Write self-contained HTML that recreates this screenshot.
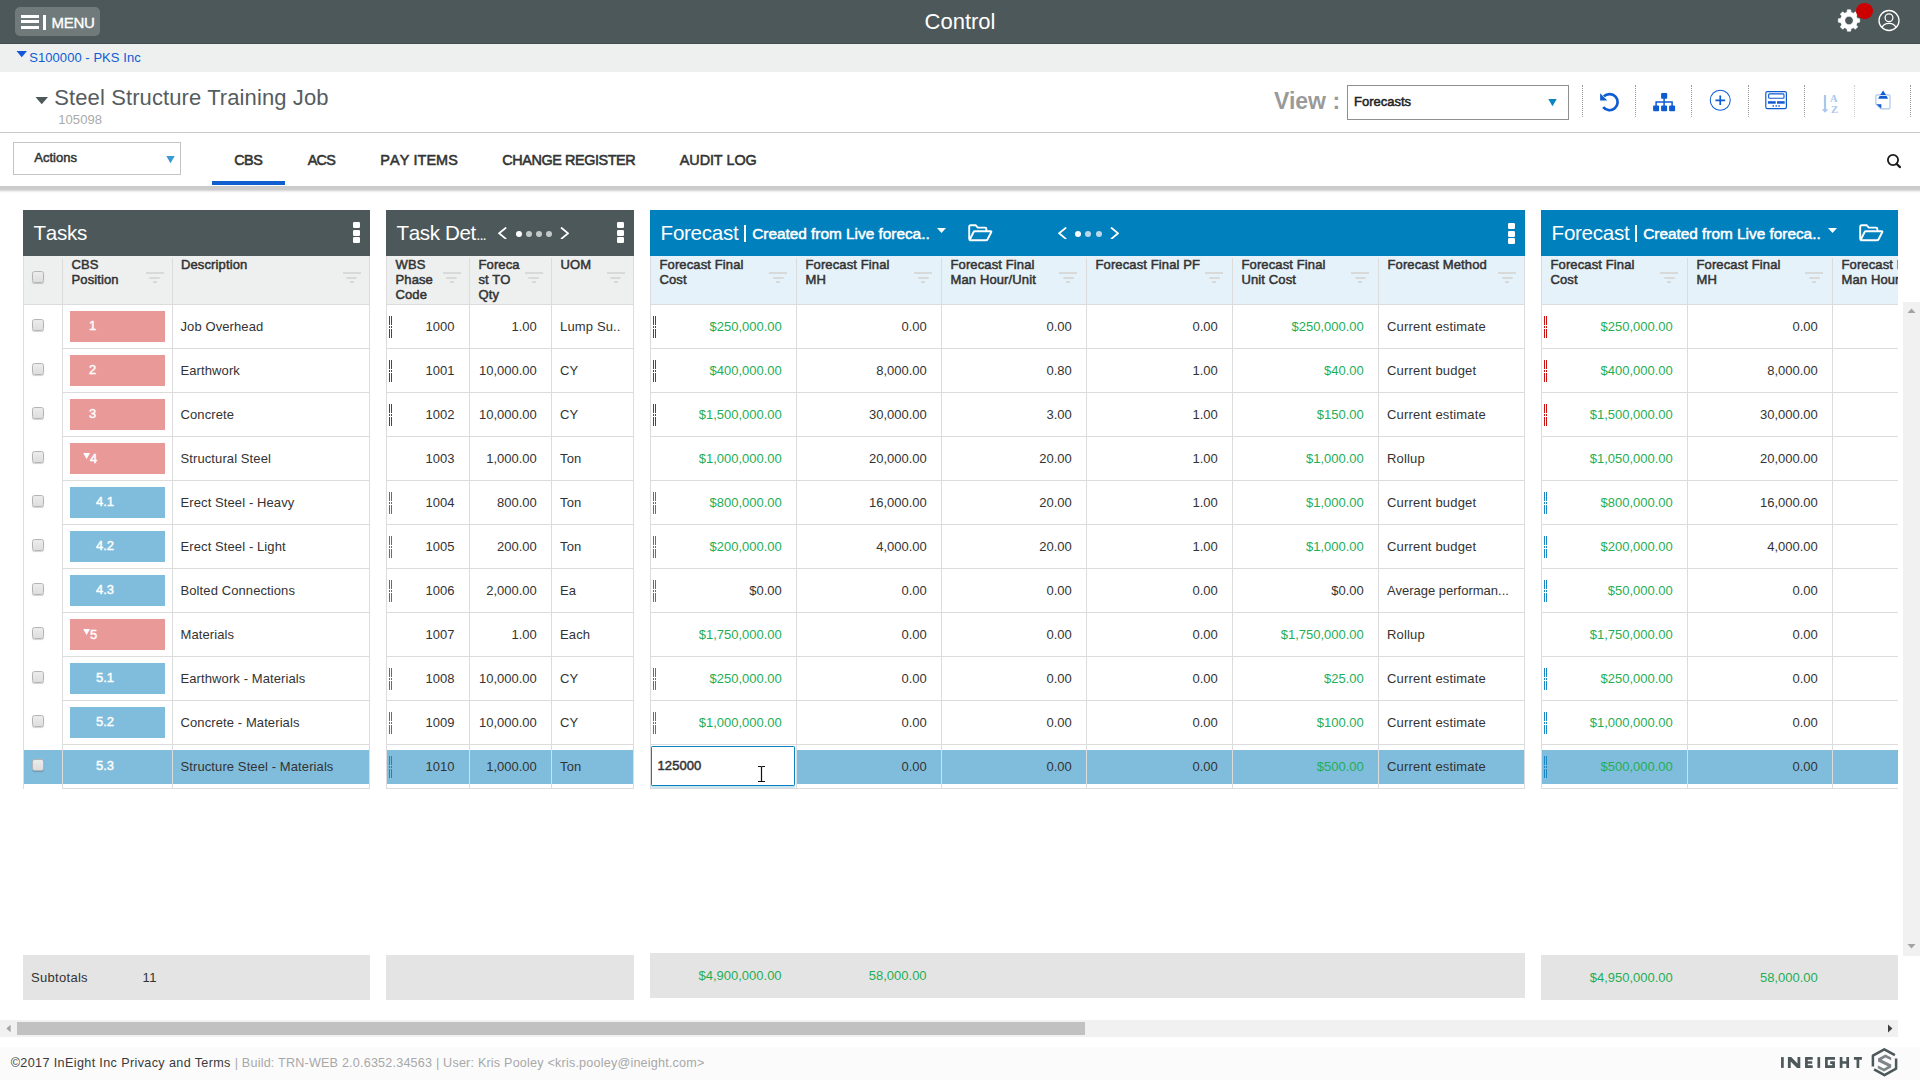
<!DOCTYPE html>
<html><head><meta charset="utf-8"><title>Control</title>
<style>
*{box-sizing:border-box;margin:0;padding:0}
html,body{width:1920px;height:1080px;overflow:hidden;background:#fff}
body{position:relative;font-family:"Liberation Sans",sans-serif;font-size:13px;color:#333}
div,svg{position:absolute}
.a{position:absolute}
.t{white-space:nowrap;line-height:43px;height:43px;font-size:13px;color:#333}
.g{color:#1fae55}
.h{white-space:nowrap;font-size:13px;line-height:15px;color:#333;-webkit-text-stroke:.5px #333;letter-spacing:.12px}
.m{-webkit-text-stroke:.45px currentColor}
.cb{width:12px;height:12px;border:1px solid #b4b4b4;border-radius:2.5px;background:linear-gradient(#ececec,#dedede);box-shadow:0 1px 1px rgba(0,0,0,.18)}
.ph{white-space:nowrap;color:#fff;font-size:20.6px;line-height:46px;height:46px}
.tab{white-space:nowrap;font-size:14.4px;color:#333;line-height:20px;top:150px;-webkit-text-stroke:.55px #333;font-kerning:none}
.sep{top:85px;width:0;height:32px;border-left:1px dotted #9a9a9a}
</style></head><body>

<div style="left:0px;top:0px;width:1920px;height:44px;background:#4d585a;border-bottom:1px solid #444e50"></div>
<div style="left:15px;top:7px;width:85px;height:29px;background:#717a7b;border-radius:5px"></div>
<div style="left:20.5px;top:14.5px;width:18.5px;height:3.2px;background:#fff"></div>
<div style="left:20.5px;top:20px;width:18.5px;height:3.2px;background:#fff"></div>
<div style="left:20.5px;top:25.5px;width:18.5px;height:3.2px;background:#fff"></div>
<div style="left:43.3px;top:15.2px;width:2.6px;height:14.6px;background:#fff"></div>
<div class="t" style="left:51.5px;top:7.5px;color:#fff;font-size:15px;line-height:30px;height:30px;letter-spacing:-.3px;-webkit-text-stroke:.35px #fff">MENU</div>
<div class="t" style="left:0px;top:0px;width:1920px;text-align:center;color:#fff;font-size:22px;line-height:43px;height:43px;left:0">Control</div>
<svg style="left:1836px;top:8px" width="26" height="26" viewBox="0 0 26 26"><path d="M11.02,4.23 L11.31,1.83 L14.69,1.83 L14.98,4.23 L17.44,5.25 L19.35,3.76 L21.74,6.15 L20.25,8.06 L21.27,10.52 L23.67,10.81 L23.67,14.19 L21.27,14.48 L20.25,16.94 L21.74,18.85 L19.35,21.24 L17.44,19.75 L14.98,20.77 L14.69,23.17 L11.31,23.17 L11.02,20.77 L8.56,19.75 L6.65,21.24 L4.26,18.85 L5.75,16.94 L4.73,14.48 L2.33,14.19 L2.33,10.81 L4.73,10.52 L5.75,8.06 L4.26,6.15 L6.65,3.76 L8.56,5.25Z M17.20,12.50 A4.2,4.2 0 1,0 8.80,12.50 A4.2,4.2 0 1,0 17.20,12.50Z" fill="#fff" fill-rule="evenodd" stroke="#fff" stroke-width=".6" stroke-linejoin="round"/></svg>
<div style="left:1856px;top:2.8px;width:17px;height:16.2px;background:#cc0000;border-radius:50%"></div>
<svg style="left:1877px;top:9px" width="24" height="24" viewBox="0 0 24 24"><defs><clipPath id="uc"><circle cx="12" cy="11.5" r="10"/></clipPath></defs><circle cx="12" cy="11.5" r="10" fill="none" stroke="#fff" stroke-width="1.3"/><circle cx="12" cy="8.8" r="3.9" fill="none" stroke="#fff" stroke-width="1.25"/><path d="M5,18.8 Q6.4,14.4 12,14.4 Q17.6,14.4 19,18.8" fill="none" stroke="#fff" stroke-width="1.25" clip-path="url(#uc)"/></svg>
<div style="left:0px;top:44px;width:1920px;height:28px;background:#eef0f0"></div>
<svg style="left:16px;top:51px" width="12" height="7" viewBox="0 0 12 7"><path d="M0.5,0 H11 L5.75,6.2Z" fill="#1358d8"/></svg>
<div class="t" style="left:29.3px;top:48px;color:#0d5cd4;font-size:13px;line-height:20px;height:20px;letter-spacing:.05px">S100000 - PKS Inc</div>
<svg style="left:35px;top:97px" width="14" height="8" viewBox="0 0 14 8"><path d="M0.5,0 H13 L6.75,7.2Z" fill="#4d585a"/></svg>
<div class="t" style="left:54.3px;top:83px;font-size:22px;line-height:30px;height:30px;color:#555d5f;letter-spacing:.1px">Steel Structure Training Job</div>
<div class="t" style="left:58.3px;top:111px;font-size:13px;line-height:18px;height:18px;color:#aaa;letter-spacing:.05px">105098</div>
<div class="t" style="left:1274px;top:84px;font-size:23px;font-weight:bold;line-height:34px;height:34px;color:#9a9a9a">View :</div>
<div style="left:1347px;top:85px;width:222px;height:35px;border:1px solid #8f8f8f;background:#fff"></div>
<div class="t" style="left:1354px;top:91px;font-size:13px;line-height:22px;height:22px;color:#222;-webkit-text-stroke:.5px #222">Forecasts</div>
<svg style="left:1547.5px;top:99px" width="9" height="8" viewBox="0 0 9 8"><path d="M0.3,0 H8.7 L4.5,7.2Z" fill="#0d84c2"/></svg>
<div class="sep" style="left:1582px"></div>
<div class="sep" style="left:1635px"></div>
<div class="sep" style="left:1691px"></div>
<div class="sep" style="left:1748px"></div>
<div class="sep" style="left:1804px"></div>
<div class="sep" style="left:1854px;border-left-color:#cfcfcf"></div>
<div class="sep" style="left:1910px"></div>
<svg style="left:1590px;top:84px" width="320" height="34" viewBox="1590 84 320 34"><path d="M1603.9,96.3 A8.1,8.1 0 1,1 1603.2,107.2" fill="none" stroke="#0f5cd2" stroke-width="2.7"/><path d="M1600.1,93.2 V100.6 H1607.3Z" fill="#0f5cd2"/><g fill="#0f5cd2"><rect x="1661.1" y="93.1" width="6.1" height="5.6" rx=".8"/><rect x="1653.1" y="105.5" width="6" height="5.8" rx="1"/><rect x="1661.1" y="105.5" width="6" height="5.8" rx="1"/><rect x="1669.1" y="105.5" width="6" height="5.8" rx="1"/></g><path d="M1664.1,98 V106 M1656.1,106 V102.1 H1672.1 V106" fill="none" stroke="#0f5cd2" stroke-width="1.5"/><circle cx="1720.25" cy="100.25" r="10" fill="none" stroke="#0f5cd2" stroke-width="1.05"/><path d="M1720.25,95.6 V105 M1715.4,100.3 H1725.1" stroke="#0f5cd2" stroke-width="1.7" fill="none"/><rect x="1765.8" y="91.6" width="20.6" height="17.1" rx="1.6" fill="none" stroke="#0f5cd2" stroke-width="1.2"/><rect x="1768.6" y="93.9" width="15.4" height="4.4" rx="1" fill="none" stroke="#0f5cd2" stroke-width="1.1"/><rect x="1767.9" y="101.2" width="7.8" height="2.5" fill="#0f5cd2"/><rect x="1777" y="101.2" width="7.7" height="2.5" fill="#0f5cd2"/><rect x="1772.5" y="105.2" width="1.4" height="1.5" fill="#0f5cd2"/><rect x="1775.5" y="105.2" width="1.4" height="1.5" fill="#0f5cd2"/><rect x="1778.4" y="105.2" width="1.4" height="1.5" fill="#0f5cd2"/><path d="M1825,95 V110" stroke="#a9c6ec" stroke-width="2.2" fill="none"/><path d="M1821.7,109.2 H1828.4 L1825.05,112.7Z" fill="#a9c6ec"/><text x="1830" y="102.1" font-family="Liberation Serif" font-weight="bold" font-size="10.6" fill="#a9c6ec">A</text><text x="1830.9" y="112.5" font-family="Liberation Serif" font-weight="bold" font-size="10.6" fill="#a9c6ec">Z</text><path d="M1877.4,94.8 H1888.8 Q1890,94.8 1890,96 V107.6 Q1890,108.9 1888.8,108.9 H1881 L1875.9,104 V96 Q1875.9,94.8 1877.4,94.8Z" fill="#fff" stroke="#a9c6ec" stroke-width="1.2"/><path d="M1876.4,104.2 H1881.3 V108.4Z" fill="#0f5cd2"/><path d="M1883.1,90.4 L1886,95 H1880.2Z" fill="#0f5cd2"/><path d="M1879.6,96.1 H1886.6 L1888.1,98.7 H1878.1Z" fill="#0f5cd2"/></svg>
<div style="left:0px;top:132px;width:1920px;height:1px;background:#c9c9c9"></div>
<div style="left:0px;top:186px;width:1920px;height:7px;background:linear-gradient(#cacaca 0,#cdcdcd 50%,#dcdcdc 64%,#eeeeee 78%,#fafafa 92%,#fff 100%)"></div>
<div style="left:13px;top:142px;width:168px;height:33px;border:1px solid #c4c4c4;background:#fff"></div>
<div class="t" style="left:34.3px;top:147px;font-size:13px;line-height:22px;height:22px;color:#333;-webkit-text-stroke:.5px #333">Actions</div>
<svg style="left:165.5px;top:155.5px" width="9" height="8" viewBox="0 0 9 8"><path d="M0.3,0 H8.7 L4.5,7.2Z" fill="#3a9bd0"/></svg>
<div class="tab" style="left:234.20000000000002px;letter-spacing:-0.504px">CBS</div>
<div class="tab" style="left:307.8px;letter-spacing:-0.804px">ACS</div>
<div class="tab" style="left:380.3px;letter-spacing:0.085px">PAY ITEMS</div>
<div class="tab" style="left:502.3px;letter-spacing:-0.409px">CHANGE REGISTER</div>
<div class="tab" style="left:679.8px;letter-spacing:-0.076px">AUDIT LOG</div>
<div style="left:212px;top:181px;width:73px;height:4px;background:#0f5fd0"></div>
<svg style="left:1884px;top:151px" width="20" height="20" viewBox="1884 151 20 20"><circle cx="1893" cy="160" r="5.1" fill="none" stroke="#1a1a1a" stroke-width="1.8"/><path d="M1896.7,164 L1900,167.1" stroke="#1a1a1a" stroke-width="2.2" stroke-linecap="round"/></svg>
<div style="left:23px;top:210px;width:347px;height:46px;background:#4d585a"><div class="ph" style="left:10.6px;top:0;font-kerning:none;letter-spacing:-0.335px">Tasks</div></div><div style="left:23px;top:256px;width:347px;height:48px;background:#eef0f0"></div><div style="left:23px;top:256px;width:1px;height:533px;background:#dcdcdc"></div><div style="left:62px;top:258px;width:1px;height:531px;background:#dcdcdc"></div><div style="left:172px;top:258px;width:1px;height:531px;background:#dcdcdc"></div><div style="left:369px;top:256px;width:1px;height:533px;background:#dcdcdc"></div><div style="left:23px;top:304px;width:347px;height:1px;background:#dcdcdc"></div><div style="left:62px;top:348px;width:308px;height:1px;background:#dcdcdc"></div><div style="left:62px;top:392px;width:308px;height:1px;background:#dcdcdc"></div><div style="left:62px;top:436px;width:308px;height:1px;background:#dcdcdc"></div><div style="left:62px;top:480px;width:308px;height:1px;background:#dcdcdc"></div><div style="left:62px;top:524px;width:308px;height:1px;background:#dcdcdc"></div><div style="left:62px;top:568px;width:308px;height:1px;background:#dcdcdc"></div><div style="left:62px;top:612px;width:308px;height:1px;background:#dcdcdc"></div><div style="left:62px;top:656px;width:308px;height:1px;background:#dcdcdc"></div><div style="left:62px;top:700px;width:308px;height:1px;background:#dcdcdc"></div><div style="left:62px;top:744px;width:308px;height:1px;background:#dcdcdc"></div><div style="left:62px;top:788px;width:308px;height:1px;background:#dcdcdc"></div>
<div class="a" style="left:353.1px;top:222.20px;width:6.6px;height:5.9px;background:#fff;border-radius:1.3px"></div><div class="a" style="left:353.1px;top:229.75px;width:6.6px;height:5.9px;background:#fff;border-radius:1.3px"></div><div class="a" style="left:353.1px;top:237.30px;width:6.6px;height:5.9px;background:#fff;border-radius:1.3px"></div>
<div class="a cb" style="left:32px;top:271px"></div>
<div class="h" style="left:71.5px;top:256.7px">CBS<br>Position</div>
<div class="a" style="left:145.5px;top:272px;width:18px;height:2px;background:#d8dada"></div><div class="a" style="left:149.0px;top:276.5px;width:11px;height:2px;background:#d8dada;border-radius:1px"></div><div class="a" style="left:152.5px;top:281px;width:4px;height:2px;background:#d8dada"></div>
<div class="h" style="left:181px;top:256.7px">Description</div>
<div class="a" style="left:342.5px;top:272px;width:18px;height:2px;background:#d8dada"></div><div class="a" style="left:346.0px;top:276.5px;width:11px;height:2px;background:#d8dada;border-radius:1px"></div><div class="a" style="left:349.5px;top:281px;width:4px;height:2px;background:#d8dada"></div>
<div style="left:24px;top:750px;width:38px;height:34px;background:#80bddc"></div>
<div style="left:63px;top:750px;width:109px;height:34px;background:#80bddc"></div>
<div style="left:173px;top:750px;width:196px;height:34px;background:#80bddc"></div>
<div class="a cb" style="left:32px;top:319px"></div>
<div style="left:70px;top:311px;width:95px;height:31px;background:#ea9999"></div>
<div class="t" style="left:89px;top:305px;color:#fff;font-size:13px;-webkit-text-stroke:.4px #fff;top:304.3px">1</div>
<div class="t" style="left:180.5px;top:305px;letter-spacing:.1px">Job Overhead</div>
<div class="a cb" style="left:32px;top:363px"></div>
<div style="left:70px;top:355px;width:95px;height:31px;background:#ea9999"></div>
<div class="t" style="left:89px;top:349px;color:#fff;font-size:13px;-webkit-text-stroke:.4px #fff;top:348.3px">2</div>
<div class="t" style="left:180.5px;top:349px;letter-spacing:.1px">Earthwork</div>
<div class="a cb" style="left:32px;top:407px"></div>
<div style="left:70px;top:399px;width:95px;height:31px;background:#ea9999"></div>
<div class="t" style="left:89px;top:393px;color:#fff;font-size:13px;-webkit-text-stroke:.4px #fff;top:392.3px">3</div>
<div class="t" style="left:180.5px;top:393px;letter-spacing:.1px">Concrete</div>
<div class="a cb" style="left:32px;top:451px"></div>
<div style="left:70px;top:443px;width:95px;height:31px;background:#ea9999"></div>
<svg style="left:82.6px;top:453.4px" width="8" height="6.5" viewBox="0 0 8 6.5"><path d="M0.2,0 H7 L3.6,6Z" fill="#fff"/></svg>
<div class="t" style="left:90px;top:437px;color:#fff;font-size:13px;-webkit-text-stroke:.4px #fff;top:437.3px">4</div>
<div class="t" style="left:180.5px;top:437px;letter-spacing:.1px">Structural Steel</div>
<div class="a cb" style="left:32px;top:495px"></div>
<div style="left:70px;top:487px;width:95px;height:31px;background:#80bddc"></div>
<div class="t" style="left:96px;top:481px;color:#fff;font-size:13px;-webkit-text-stroke:.4px #fff;top:480.3px">4.1</div>
<div class="t" style="left:180.5px;top:481px;letter-spacing:.1px">Erect Steel - Heavy</div>
<div class="a cb" style="left:32px;top:539px"></div>
<div style="left:70px;top:531px;width:95px;height:31px;background:#80bddc"></div>
<div class="t" style="left:96px;top:525px;color:#fff;font-size:13px;-webkit-text-stroke:.4px #fff;top:524.3px">4.2</div>
<div class="t" style="left:180.5px;top:525px;letter-spacing:.1px">Erect Steel - Light</div>
<div class="a cb" style="left:32px;top:583px"></div>
<div style="left:70px;top:575px;width:95px;height:31px;background:#80bddc"></div>
<div class="t" style="left:96px;top:569px;color:#fff;font-size:13px;-webkit-text-stroke:.4px #fff;top:568.3px">4.3</div>
<div class="t" style="left:180.5px;top:569px;letter-spacing:.1px">Bolted Connections</div>
<div class="a cb" style="left:32px;top:627px"></div>
<div style="left:70px;top:619px;width:95px;height:31px;background:#ea9999"></div>
<svg style="left:82.6px;top:629.4px" width="8" height="6.5" viewBox="0 0 8 6.5"><path d="M0.2,0 H7 L3.6,6Z" fill="#fff"/></svg>
<div class="t" style="left:90px;top:613px;color:#fff;font-size:13px;-webkit-text-stroke:.4px #fff;top:613.3px">5</div>
<div class="t" style="left:180.5px;top:613px;letter-spacing:.1px">Materials</div>
<div class="a cb" style="left:32px;top:671px"></div>
<div style="left:70px;top:663px;width:95px;height:31px;background:#80bddc"></div>
<div class="t" style="left:96px;top:657px;color:#fff;font-size:13px;-webkit-text-stroke:.4px #fff;top:656.3px">5.1</div>
<div class="t" style="left:180.5px;top:657px;letter-spacing:.1px">Earthwork - Materials</div>
<div class="a cb" style="left:32px;top:715px"></div>
<div style="left:70px;top:707px;width:95px;height:31px;background:#80bddc"></div>
<div class="t" style="left:96px;top:701px;color:#fff;font-size:13px;-webkit-text-stroke:.4px #fff;top:700.3px">5.2</div>
<div class="t" style="left:180.5px;top:701px;letter-spacing:.1px">Concrete - Materials</div>
<div class="a cb" style="left:32px;top:759px"></div>
<div class="t" style="left:96px;top:745px;color:#fff;font-size:13px;-webkit-text-stroke:.4px #fff;top:744.3px">5.3</div>
<div class="t" style="left:180.5px;top:745px;letter-spacing:.1px">Structure Steel - Materials</div>
<div style="left:386px;top:210px;width:248px;height:46px;background:#4d585a"><div class="ph" style="left:10.6px;top:0;font-kerning:none;letter-spacing:-0.403px">Task Det<span style="font-size:15px;letter-spacing:-1.1px;margin-left:.6px">...</span></div></div><div style="left:386px;top:256px;width:248px;height:48px;background:#eef0f0"></div><div style="left:386px;top:256px;width:1px;height:533px;background:#dcdcdc"></div><div style="left:469px;top:258px;width:1px;height:531px;background:#dcdcdc"></div><div style="left:551px;top:258px;width:1px;height:531px;background:#dcdcdc"></div><div style="left:633px;top:256px;width:1px;height:533px;background:#dcdcdc"></div><div style="left:386px;top:304px;width:248px;height:1px;background:#dcdcdc"></div><div style="left:386px;top:348px;width:248px;height:1px;background:#dcdcdc"></div><div style="left:386px;top:392px;width:248px;height:1px;background:#dcdcdc"></div><div style="left:386px;top:436px;width:248px;height:1px;background:#dcdcdc"></div><div style="left:386px;top:480px;width:248px;height:1px;background:#dcdcdc"></div><div style="left:386px;top:524px;width:248px;height:1px;background:#dcdcdc"></div><div style="left:386px;top:568px;width:248px;height:1px;background:#dcdcdc"></div><div style="left:386px;top:612px;width:248px;height:1px;background:#dcdcdc"></div><div style="left:386px;top:656px;width:248px;height:1px;background:#dcdcdc"></div><div style="left:386px;top:700px;width:248px;height:1px;background:#dcdcdc"></div><div style="left:386px;top:744px;width:248px;height:1px;background:#dcdcdc"></div><div style="left:386px;top:788px;width:248px;height:1px;background:#dcdcdc"></div>
<svg class="a" style="left:498.3px;top:226.6px" width="9.2" height="12.6" viewBox="0 0 9.2 12.6"><path d="M8.2,0.5 L1.1,6.3 L8.2,12.1" fill="none" stroke="#fff" stroke-width="1.8"/></svg>
<div class="a" style="left:515.8px;top:230.70000000000002px;width:6.2px;height:6.2px;border-radius:50%;background:#fff"></div><div class="a" style="left:525.8px;top:230.70000000000002px;width:6.2px;height:6.2px;border-radius:50%;background:#c4c8c9"></div><div class="a" style="left:535.9px;top:230.70000000000002px;width:6.2px;height:6.2px;border-radius:50%;background:#c4c8c9"></div><div class="a" style="left:545.9px;top:230.70000000000002px;width:6.2px;height:6.2px;border-radius:50%;background:#c4c8c9"></div>
<svg class="a" style="left:560.2px;top:226.6px" width="9.2" height="12.6" viewBox="0 0 9.2 12.6"><path d="M1,0.5 L8.1,6.3 L1,12.1" fill="none" stroke="#fff" stroke-width="1.8"/></svg>
<div class="a" style="left:617.1px;top:222.20px;width:6.6px;height:5.9px;background:#fff;border-radius:1.3px"></div><div class="a" style="left:617.1px;top:229.75px;width:6.6px;height:5.9px;background:#fff;border-radius:1.3px"></div><div class="a" style="left:617.1px;top:237.30px;width:6.6px;height:5.9px;background:#fff;border-radius:1.3px"></div>
<div class="h" style="left:395.5px;top:256.7px">WBS<br>Phase<br>Code</div>
<div class="a" style="left:442.7px;top:272px;width:18px;height:2px;background:#d8dada"></div><div class="a" style="left:446.2px;top:276.5px;width:11px;height:2px;background:#d8dada;border-radius:1px"></div><div class="a" style="left:449.7px;top:281px;width:4px;height:2px;background:#d8dada"></div>
<div class="h" style="left:478.5px;top:256.7px">Foreca<br>st TO<br>Qty</div>
<div class="a" style="left:524.7px;top:272px;width:18px;height:2px;background:#d8dada"></div><div class="a" style="left:528.2px;top:276.5px;width:11px;height:2px;background:#d8dada;border-radius:1px"></div><div class="a" style="left:531.7px;top:281px;width:4px;height:2px;background:#d8dada"></div>
<div class="h" style="left:560.5px;top:256.7px">UOM</div>
<div class="a" style="left:606.7px;top:272px;width:18px;height:2px;background:#d8dada"></div><div class="a" style="left:610.2px;top:276.5px;width:11px;height:2px;background:#d8dada;border-radius:1px"></div><div class="a" style="left:613.7px;top:281px;width:4px;height:2px;background:#d8dada"></div>
<div style="left:387px;top:750px;width:82px;height:34px;background:#80bddc"></div>
<div style="left:470px;top:750px;width:81px;height:34px;background:#80bddc"></div>
<div style="left:552px;top:750px;width:81px;height:34px;background:#80bddc"></div>
<div class="a" style="left:389px;top:316px;width:1px;height:9px;background:#cc1111"></div><div class="a" style="left:389px;top:326px;width:1px;height:2px;background:#cc1111"></div><div class="a" style="left:389px;top:329px;width:1px;height:9px;background:#cc1111"></div><div class="a" style="left:391px;top:316px;width:1px;height:9px;background:#cc1111"></div><div class="a" style="left:391px;top:326px;width:1px;height:2px;background:#cc1111"></div><div class="a" style="left:391px;top:329px;width:1px;height:9px;background:#cc1111"></div>
<div class="t" style="right:1465.5px;top:305px;">1000</div>
<div class="t" style="right:1383.2px;top:305px;">1.00</div>
<div class="t" style="left:560px;top:305px;letter-spacing:.15px">Lump Su..</div>
<div class="a" style="left:389px;top:360px;width:1px;height:9px;background:#cc1111"></div><div class="a" style="left:389px;top:370px;width:1px;height:2px;background:#cc1111"></div><div class="a" style="left:389px;top:373px;width:1px;height:9px;background:#cc1111"></div><div class="a" style="left:391px;top:360px;width:1px;height:9px;background:#cc1111"></div><div class="a" style="left:391px;top:370px;width:1px;height:2px;background:#cc1111"></div><div class="a" style="left:391px;top:373px;width:1px;height:9px;background:#cc1111"></div>
<div class="t" style="right:1465.5px;top:349px;">1001</div>
<div class="t" style="right:1383.2px;top:349px;">10,000.00</div>
<div class="t" style="left:560px;top:349px;letter-spacing:.15px">CY</div>
<div class="a" style="left:389px;top:404px;width:1px;height:9px;background:#cc1111"></div><div class="a" style="left:389px;top:414px;width:1px;height:2px;background:#cc1111"></div><div class="a" style="left:389px;top:417px;width:1px;height:9px;background:#cc1111"></div><div class="a" style="left:391px;top:404px;width:1px;height:9px;background:#cc1111"></div><div class="a" style="left:391px;top:414px;width:1px;height:2px;background:#cc1111"></div><div class="a" style="left:391px;top:417px;width:1px;height:9px;background:#cc1111"></div>
<div class="t" style="right:1465.5px;top:393px;">1002</div>
<div class="t" style="right:1383.2px;top:393px;">10,000.00</div>
<div class="t" style="left:560px;top:393px;letter-spacing:.15px">CY</div>
<div class="t" style="right:1465.5px;top:437px;">1003</div>
<div class="t" style="right:1383.2px;top:437px;">1,000.00</div>
<div class="t" style="left:560px;top:437px;letter-spacing:.15px">Ton</div>
<div class="a" style="left:389px;top:492px;width:1px;height:9px;background:#1b86c4"></div><div class="a" style="left:389px;top:502px;width:1px;height:2px;background:#1b86c4"></div><div class="a" style="left:389px;top:505px;width:1px;height:9px;background:#1b86c4"></div><div class="a" style="left:391px;top:492px;width:1px;height:9px;background:#1b86c4"></div><div class="a" style="left:391px;top:502px;width:1px;height:2px;background:#1b86c4"></div><div class="a" style="left:391px;top:505px;width:1px;height:9px;background:#1b86c4"></div>
<div class="t" style="right:1465.5px;top:481px;">1004</div>
<div class="t" style="right:1383.2px;top:481px;">800.00</div>
<div class="t" style="left:560px;top:481px;letter-spacing:.15px">Ton</div>
<div class="a" style="left:389px;top:536px;width:1px;height:9px;background:#1b86c4"></div><div class="a" style="left:389px;top:546px;width:1px;height:2px;background:#1b86c4"></div><div class="a" style="left:389px;top:549px;width:1px;height:9px;background:#1b86c4"></div><div class="a" style="left:391px;top:536px;width:1px;height:9px;background:#1b86c4"></div><div class="a" style="left:391px;top:546px;width:1px;height:2px;background:#1b86c4"></div><div class="a" style="left:391px;top:549px;width:1px;height:9px;background:#1b86c4"></div>
<div class="t" style="right:1465.5px;top:525px;">1005</div>
<div class="t" style="right:1383.2px;top:525px;">200.00</div>
<div class="t" style="left:560px;top:525px;letter-spacing:.15px">Ton</div>
<div class="a" style="left:389px;top:580px;width:1px;height:9px;background:#1b86c4"></div><div class="a" style="left:389px;top:590px;width:1px;height:2px;background:#1b86c4"></div><div class="a" style="left:389px;top:593px;width:1px;height:9px;background:#1b86c4"></div><div class="a" style="left:391px;top:580px;width:1px;height:9px;background:#1b86c4"></div><div class="a" style="left:391px;top:590px;width:1px;height:2px;background:#1b86c4"></div><div class="a" style="left:391px;top:593px;width:1px;height:9px;background:#1b86c4"></div>
<div class="t" style="right:1465.5px;top:569px;">1006</div>
<div class="t" style="right:1383.2px;top:569px;">2,000.00</div>
<div class="t" style="left:560px;top:569px;letter-spacing:.15px">Ea</div>
<div class="t" style="right:1465.5px;top:613px;">1007</div>
<div class="t" style="right:1383.2px;top:613px;">1.00</div>
<div class="t" style="left:560px;top:613px;letter-spacing:.15px">Each</div>
<div class="a" style="left:389px;top:668px;width:1px;height:9px;background:#1b86c4"></div><div class="a" style="left:389px;top:678px;width:1px;height:2px;background:#1b86c4"></div><div class="a" style="left:389px;top:681px;width:1px;height:9px;background:#1b86c4"></div><div class="a" style="left:391px;top:668px;width:1px;height:9px;background:#1b86c4"></div><div class="a" style="left:391px;top:678px;width:1px;height:2px;background:#1b86c4"></div><div class="a" style="left:391px;top:681px;width:1px;height:9px;background:#1b86c4"></div>
<div class="t" style="right:1465.5px;top:657px;">1008</div>
<div class="t" style="right:1383.2px;top:657px;">10,000.00</div>
<div class="t" style="left:560px;top:657px;letter-spacing:.15px">CY</div>
<div class="a" style="left:389px;top:712px;width:1px;height:9px;background:#1b86c4"></div><div class="a" style="left:389px;top:722px;width:1px;height:2px;background:#1b86c4"></div><div class="a" style="left:389px;top:725px;width:1px;height:9px;background:#1b86c4"></div><div class="a" style="left:391px;top:712px;width:1px;height:9px;background:#1b86c4"></div><div class="a" style="left:391px;top:722px;width:1px;height:2px;background:#1b86c4"></div><div class="a" style="left:391px;top:725px;width:1px;height:9px;background:#1b86c4"></div>
<div class="t" style="right:1465.5px;top:701px;">1009</div>
<div class="t" style="right:1383.2px;top:701px;">10,000.00</div>
<div class="t" style="left:560px;top:701px;letter-spacing:.15px">CY</div>
<div class="a" style="left:389px;top:756px;width:1px;height:9px;background:#1b86c4"></div><div class="a" style="left:389px;top:766px;width:1px;height:2px;background:#1b86c4"></div><div class="a" style="left:389px;top:769px;width:1px;height:9px;background:#1b86c4"></div><div class="a" style="left:391px;top:756px;width:1px;height:9px;background:#1b86c4"></div><div class="a" style="left:391px;top:766px;width:1px;height:2px;background:#1b86c4"></div><div class="a" style="left:391px;top:769px;width:1px;height:9px;background:#1b86c4"></div>
<div class="t" style="right:1465.5px;top:745px;">1010</div>
<div class="t" style="right:1383.2px;top:745px;">1,000.00</div>
<div class="t" style="left:560px;top:745px;letter-spacing:.15px">Ton</div>
<div style="left:650px;top:210px;width:875px;height:46px;background:#0080bd"><div class="ph" style="left:10.6px;top:0;font-kerning:none;letter-spacing:-0.291px">Forecast</div><div class="a" style="left:94.3px;top:15.3px;width:1.9px;height:16.6px;background:#fff"></div><div class="ph" style="left:102.2px;top:.5px;font-size:15.4px;-webkit-text-stroke:.5px #fff;font-kerning:none;letter-spacing:-0.017px">Created from Live foreca..</div><svg style="left:286.5px;top:18px" width="9" height="5" viewBox="0 0 9 5"><path d="M0,0 H9 L4.5,5Z" fill="#fff"/></svg><svg class="a" style="left:318px;top:13.5px" width="25" height="18" viewBox="0 0 25 18"><path d="M1.2,15.5 V2.6 Q1.2,1.2 2.6,1.2 H7.6 L9.8,3.6 H17 Q18.4,3.6 18.4,5 V7" fill="none" stroke="#fff" stroke-width="1.9" stroke-linejoin="round"/><path d="M1.6,16 L5.6,8 Q6,7.2 7,7.2 H22.6 Q23.8,7.2 23.2,8.3 L19.6,15.2 Q19.1,16.2 18,16.2 H2 Z" fill="none" stroke="#fff" stroke-width="1.9" stroke-linejoin="round"/></svg></div><div style="left:650px;top:256px;width:875px;height:48px;background:#e6f2f9"></div><div style="left:650px;top:256px;width:1px;height:533px;background:#dcdcdc"></div><div style="left:796px;top:258px;width:1px;height:531px;background:#dcdcdc"></div><div style="left:941px;top:258px;width:1px;height:531px;background:#dcdcdc"></div><div style="left:1086px;top:258px;width:1px;height:531px;background:#dcdcdc"></div><div style="left:1232px;top:258px;width:1px;height:531px;background:#dcdcdc"></div><div style="left:1378px;top:258px;width:1px;height:531px;background:#dcdcdc"></div><div style="left:1524px;top:256px;width:1px;height:533px;background:#dcdcdc"></div><div style="left:650px;top:304px;width:875px;height:1px;background:#dcdcdc"></div><div style="left:650px;top:348px;width:875px;height:1px;background:#dcdcdc"></div><div style="left:650px;top:392px;width:875px;height:1px;background:#dcdcdc"></div><div style="left:650px;top:436px;width:875px;height:1px;background:#dcdcdc"></div><div style="left:650px;top:480px;width:875px;height:1px;background:#dcdcdc"></div><div style="left:650px;top:524px;width:875px;height:1px;background:#dcdcdc"></div><div style="left:650px;top:568px;width:875px;height:1px;background:#dcdcdc"></div><div style="left:650px;top:612px;width:875px;height:1px;background:#dcdcdc"></div><div style="left:650px;top:656px;width:875px;height:1px;background:#dcdcdc"></div><div style="left:650px;top:700px;width:875px;height:1px;background:#dcdcdc"></div><div style="left:650px;top:744px;width:875px;height:1px;background:#dcdcdc"></div><div style="left:650px;top:788px;width:875px;height:1px;background:#dcdcdc"></div>
<svg class="a" style="left:1057.9px;top:226.6px" width="9.2" height="12.6" viewBox="0 0 9.2 12.6"><path d="M8.2,0.5 L1.1,6.3 L8.2,12.1" fill="none" stroke="#fff" stroke-width="1.8"/></svg>
<div class="a" style="left:1075.1000000000001px;top:230.70000000000002px;width:6.2px;height:6.2px;border-radius:50%;background:#fff"></div><div class="a" style="left:1085.3000000000002px;top:230.70000000000002px;width:6.2px;height:6.2px;border-radius:50%;background:#b9d9ea"></div><div class="a" style="left:1095.5px;top:230.70000000000002px;width:6.2px;height:6.2px;border-radius:50%;background:#b9d9ea"></div>
<svg class="a" style="left:1110px;top:226.6px" width="9.2" height="12.6" viewBox="0 0 9.2 12.6"><path d="M1,0.5 L8.1,6.3 L1,12.1" fill="none" stroke="#fff" stroke-width="1.8"/></svg>
<div class="a" style="left:1508.0px;top:223.20px;width:6.6px;height:5.9px;background:#fff;border-radius:1.3px"></div><div class="a" style="left:1508.0px;top:230.75px;width:6.6px;height:5.9px;background:#fff;border-radius:1.3px"></div><div class="a" style="left:1508.0px;top:238.30px;width:6.6px;height:5.9px;background:#fff;border-radius:1.3px"></div>
<div class="h" style="left:659.5px;top:256.7px">Forecast Final<br>Cost</div>
<div class="a" style="left:769px;top:272px;width:18px;height:2px;background:#d8dada"></div><div class="a" style="left:772.5px;top:276.5px;width:11px;height:2px;background:#d8dada;border-radius:1px"></div><div class="a" style="left:776px;top:281px;width:4px;height:2px;background:#d8dada"></div>
<div class="h" style="left:805.5px;top:256.7px">Forecast Final<br>MH</div>
<div class="a" style="left:914px;top:272px;width:18px;height:2px;background:#d8dada"></div><div class="a" style="left:917.5px;top:276.5px;width:11px;height:2px;background:#d8dada;border-radius:1px"></div><div class="a" style="left:921px;top:281px;width:4px;height:2px;background:#d8dada"></div>
<div class="h" style="left:950.5px;top:256.7px">Forecast Final<br>Man Hour/Unit</div>
<div class="a" style="left:1059px;top:272px;width:18px;height:2px;background:#d8dada"></div><div class="a" style="left:1062.5px;top:276.5px;width:11px;height:2px;background:#d8dada;border-radius:1px"></div><div class="a" style="left:1066px;top:281px;width:4px;height:2px;background:#d8dada"></div>
<div class="h" style="left:1095.5px;top:256.7px">Forecast Final PF</div>
<div class="a" style="left:1205px;top:272px;width:18px;height:2px;background:#d8dada"></div><div class="a" style="left:1208.5px;top:276.5px;width:11px;height:2px;background:#d8dada;border-radius:1px"></div><div class="a" style="left:1212px;top:281px;width:4px;height:2px;background:#d8dada"></div>
<div class="h" style="left:1241.5px;top:256.7px">Forecast Final<br>Unit Cost</div>
<div class="a" style="left:1351px;top:272px;width:18px;height:2px;background:#d8dada"></div><div class="a" style="left:1354.5px;top:276.5px;width:11px;height:2px;background:#d8dada;border-radius:1px"></div><div class="a" style="left:1358px;top:281px;width:4px;height:2px;background:#d8dada"></div>
<div class="h" style="left:1387.5px;top:256.7px">Forecast Method</div>
<div class="a" style="left:1498px;top:272px;width:18px;height:2px;background:#d8dada"></div><div class="a" style="left:1501.5px;top:276.5px;width:11px;height:2px;background:#d8dada;border-radius:1px"></div><div class="a" style="left:1505px;top:281px;width:4px;height:2px;background:#d8dada"></div>
<div style="left:797px;top:750px;width:144px;height:34px;background:#80bddc"></div>
<div style="left:942px;top:750px;width:144px;height:34px;background:#80bddc"></div>
<div style="left:1087px;top:750px;width:145px;height:34px;background:#80bddc"></div>
<div style="left:1233px;top:750px;width:145px;height:34px;background:#80bddc"></div>
<div style="left:1379px;top:750px;width:145px;height:34px;background:#80bddc"></div>
<div class="a" style="left:653px;top:316px;width:1px;height:9px;background:#cc1111"></div><div class="a" style="left:653px;top:326px;width:1px;height:2px;background:#cc1111"></div><div class="a" style="left:653px;top:329px;width:1px;height:9px;background:#cc1111"></div><div class="a" style="left:655px;top:316px;width:1px;height:9px;background:#cc1111"></div><div class="a" style="left:655px;top:326px;width:1px;height:2px;background:#cc1111"></div><div class="a" style="left:655px;top:329px;width:1px;height:9px;background:#cc1111"></div>
<div class="t g" style="right:1138.2px;top:305px;">$250,000.00</div>
<div class="t" style="right:993.2px;top:305px;">0.00</div>
<div class="t" style="right:848.2px;top:305px;">0.00</div>
<div class="t" style="right:702.2px;top:305px;">0.00</div>
<div class="t g" style="right:556.2px;top:305px;">$250,000.00</div>
<div class="t" style="left:1387px;top:305px;letter-spacing:.18px">Current estimate</div>
<div class="a" style="left:653px;top:360px;width:1px;height:9px;background:#cc1111"></div><div class="a" style="left:653px;top:370px;width:1px;height:2px;background:#cc1111"></div><div class="a" style="left:653px;top:373px;width:1px;height:9px;background:#cc1111"></div><div class="a" style="left:655px;top:360px;width:1px;height:9px;background:#cc1111"></div><div class="a" style="left:655px;top:370px;width:1px;height:2px;background:#cc1111"></div><div class="a" style="left:655px;top:373px;width:1px;height:9px;background:#cc1111"></div>
<div class="t g" style="right:1138.2px;top:349px;">$400,000.00</div>
<div class="t" style="right:993.2px;top:349px;">8,000.00</div>
<div class="t" style="right:848.2px;top:349px;">0.80</div>
<div class="t" style="right:702.2px;top:349px;">1.00</div>
<div class="t g" style="right:556.2px;top:349px;">$40.00</div>
<div class="t" style="left:1387px;top:349px;letter-spacing:.18px">Current budget</div>
<div class="a" style="left:653px;top:404px;width:1px;height:9px;background:#cc1111"></div><div class="a" style="left:653px;top:414px;width:1px;height:2px;background:#cc1111"></div><div class="a" style="left:653px;top:417px;width:1px;height:9px;background:#cc1111"></div><div class="a" style="left:655px;top:404px;width:1px;height:9px;background:#cc1111"></div><div class="a" style="left:655px;top:414px;width:1px;height:2px;background:#cc1111"></div><div class="a" style="left:655px;top:417px;width:1px;height:9px;background:#cc1111"></div>
<div class="t g" style="right:1138.2px;top:393px;">$1,500,000.00</div>
<div class="t" style="right:993.2px;top:393px;">30,000.00</div>
<div class="t" style="right:848.2px;top:393px;">3.00</div>
<div class="t" style="right:702.2px;top:393px;">1.00</div>
<div class="t g" style="right:556.2px;top:393px;">$150.00</div>
<div class="t" style="left:1387px;top:393px;letter-spacing:.18px">Current estimate</div>
<div class="t g" style="right:1138.2px;top:437px;">$1,000,000.00</div>
<div class="t" style="right:993.2px;top:437px;">20,000.00</div>
<div class="t" style="right:848.2px;top:437px;">20.00</div>
<div class="t" style="right:702.2px;top:437px;">1.00</div>
<div class="t g" style="right:556.2px;top:437px;">$1,000.00</div>
<div class="t" style="left:1387px;top:437px;letter-spacing:.18px">Rollup</div>
<div class="a" style="left:653px;top:492px;width:1px;height:9px;background:#1b86c4"></div><div class="a" style="left:653px;top:502px;width:1px;height:2px;background:#1b86c4"></div><div class="a" style="left:653px;top:505px;width:1px;height:9px;background:#1b86c4"></div><div class="a" style="left:655px;top:492px;width:1px;height:9px;background:#1b86c4"></div><div class="a" style="left:655px;top:502px;width:1px;height:2px;background:#1b86c4"></div><div class="a" style="left:655px;top:505px;width:1px;height:9px;background:#1b86c4"></div>
<div class="t g" style="right:1138.2px;top:481px;">$800,000.00</div>
<div class="t" style="right:993.2px;top:481px;">16,000.00</div>
<div class="t" style="right:848.2px;top:481px;">20.00</div>
<div class="t" style="right:702.2px;top:481px;">1.00</div>
<div class="t g" style="right:556.2px;top:481px;">$1,000.00</div>
<div class="t" style="left:1387px;top:481px;letter-spacing:.18px">Current budget</div>
<div class="a" style="left:653px;top:536px;width:1px;height:9px;background:#1b86c4"></div><div class="a" style="left:653px;top:546px;width:1px;height:2px;background:#1b86c4"></div><div class="a" style="left:653px;top:549px;width:1px;height:9px;background:#1b86c4"></div><div class="a" style="left:655px;top:536px;width:1px;height:9px;background:#1b86c4"></div><div class="a" style="left:655px;top:546px;width:1px;height:2px;background:#1b86c4"></div><div class="a" style="left:655px;top:549px;width:1px;height:9px;background:#1b86c4"></div>
<div class="t g" style="right:1138.2px;top:525px;">$200,000.00</div>
<div class="t" style="right:993.2px;top:525px;">4,000.00</div>
<div class="t" style="right:848.2px;top:525px;">20.00</div>
<div class="t" style="right:702.2px;top:525px;">1.00</div>
<div class="t g" style="right:556.2px;top:525px;">$1,000.00</div>
<div class="t" style="left:1387px;top:525px;letter-spacing:.18px">Current budget</div>
<div class="a" style="left:653px;top:580px;width:1px;height:9px;background:#1b86c4"></div><div class="a" style="left:653px;top:590px;width:1px;height:2px;background:#1b86c4"></div><div class="a" style="left:653px;top:593px;width:1px;height:9px;background:#1b86c4"></div><div class="a" style="left:655px;top:580px;width:1px;height:9px;background:#1b86c4"></div><div class="a" style="left:655px;top:590px;width:1px;height:2px;background:#1b86c4"></div><div class="a" style="left:655px;top:593px;width:1px;height:9px;background:#1b86c4"></div>
<div class="t" style="right:1138.2px;top:569px;">$0.00</div>
<div class="t" style="right:993.2px;top:569px;">0.00</div>
<div class="t" style="right:848.2px;top:569px;">0.00</div>
<div class="t" style="right:702.2px;top:569px;">0.00</div>
<div class="t" style="right:556.2px;top:569px;">$0.00</div>
<div class="t" style="left:1387px;top:569px;letter-spacing:0px">Average performan...</div>
<div class="t g" style="right:1138.2px;top:613px;">$1,750,000.00</div>
<div class="t" style="right:993.2px;top:613px;">0.00</div>
<div class="t" style="right:848.2px;top:613px;">0.00</div>
<div class="t" style="right:702.2px;top:613px;">0.00</div>
<div class="t g" style="right:556.2px;top:613px;">$1,750,000.00</div>
<div class="t" style="left:1387px;top:613px;letter-spacing:.18px">Rollup</div>
<div class="a" style="left:653px;top:668px;width:1px;height:9px;background:#1b86c4"></div><div class="a" style="left:653px;top:678px;width:1px;height:2px;background:#1b86c4"></div><div class="a" style="left:653px;top:681px;width:1px;height:9px;background:#1b86c4"></div><div class="a" style="left:655px;top:668px;width:1px;height:9px;background:#1b86c4"></div><div class="a" style="left:655px;top:678px;width:1px;height:2px;background:#1b86c4"></div><div class="a" style="left:655px;top:681px;width:1px;height:9px;background:#1b86c4"></div>
<div class="t g" style="right:1138.2px;top:657px;">$250,000.00</div>
<div class="t" style="right:993.2px;top:657px;">0.00</div>
<div class="t" style="right:848.2px;top:657px;">0.00</div>
<div class="t" style="right:702.2px;top:657px;">0.00</div>
<div class="t g" style="right:556.2px;top:657px;">$25.00</div>
<div class="t" style="left:1387px;top:657px;letter-spacing:.18px">Current estimate</div>
<div class="a" style="left:653px;top:712px;width:1px;height:9px;background:#1b86c4"></div><div class="a" style="left:653px;top:722px;width:1px;height:2px;background:#1b86c4"></div><div class="a" style="left:653px;top:725px;width:1px;height:9px;background:#1b86c4"></div><div class="a" style="left:655px;top:712px;width:1px;height:9px;background:#1b86c4"></div><div class="a" style="left:655px;top:722px;width:1px;height:2px;background:#1b86c4"></div><div class="a" style="left:655px;top:725px;width:1px;height:9px;background:#1b86c4"></div>
<div class="t g" style="right:1138.2px;top:701px;">$1,000,000.00</div>
<div class="t" style="right:993.2px;top:701px;">0.00</div>
<div class="t" style="right:848.2px;top:701px;">0.00</div>
<div class="t" style="right:702.2px;top:701px;">0.00</div>
<div class="t g" style="right:556.2px;top:701px;">$100.00</div>
<div class="t" style="left:1387px;top:701px;letter-spacing:.18px">Current estimate</div>
<div class="t" style="right:993.2px;top:745px;">0.00</div>
<div class="t" style="right:848.2px;top:745px;">0.00</div>
<div class="t" style="right:702.2px;top:745px;">0.00</div>
<div class="t g" style="right:556.2px;top:745px;">$500.00</div>
<div class="t" style="left:1387px;top:745px;letter-spacing:.18px">Current estimate</div>
<div style="left:650.7px;top:745.7px;width:144.8px;height:40.3px;background:#fff;border:1.4px solid #0a82c0;border-radius:1.2px;box-shadow:0 1.5px 1px rgba(0,128,189,.22)"></div>
<div class="t" style="left:657.6px;top:744px;font-size:13px;-webkit-text-stroke:.5px #333;letter-spacing:.05px">125000</div>
<svg style="left:757px;top:765px" width="9" height="18" viewBox="0 0 9 18"><path d="M1,1.5 H3.6 Q4.5,1.5 4.5,2.6 V15.4 Q4.5,16.5 3.6,16.5 H1 M8,1.5 H5.4 Q4.5,1.5 4.5,2.6 M4.5,15.4 Q4.5,16.5 5.4,16.5 H8" fill="none" stroke="#111" stroke-width="1.2"/></svg>
<div style="left:0;top:0;width:1898px;height:1016px;overflow:hidden">
<div style="left:1541px;top:210px;width:437px;height:46px;background:#0080bd"><div class="ph" style="left:10.6px;top:0;font-kerning:none;letter-spacing:-0.291px">Forecast</div><div class="a" style="left:94.3px;top:15.3px;width:1.9px;height:16.6px;background:#fff"></div><div class="ph" style="left:102.2px;top:.5px;font-size:15.4px;-webkit-text-stroke:.5px #fff;font-kerning:none;letter-spacing:-0.017px">Created from Live foreca..</div><svg style="left:286.5px;top:18px" width="9" height="5" viewBox="0 0 9 5"><path d="M0,0 H9 L4.5,5Z" fill="#fff"/></svg><svg class="a" style="left:318px;top:13.5px" width="25" height="18" viewBox="0 0 25 18"><path d="M1.2,15.5 V2.6 Q1.2,1.2 2.6,1.2 H7.6 L9.8,3.6 H17 Q18.4,3.6 18.4,5 V7" fill="none" stroke="#fff" stroke-width="1.9" stroke-linejoin="round"/><path d="M1.6,16 L5.6,8 Q6,7.2 7,7.2 H22.6 Q23.8,7.2 23.2,8.3 L19.6,15.2 Q19.1,16.2 18,16.2 H2 Z" fill="none" stroke="#fff" stroke-width="1.9" stroke-linejoin="round"/></svg></div><div style="left:1541px;top:256px;width:437px;height:48px;background:#e6f2f9"></div><div style="left:1541px;top:256px;width:1px;height:533px;background:#dcdcdc"></div><div style="left:1687px;top:258px;width:1px;height:531px;background:#dcdcdc"></div><div style="left:1832px;top:258px;width:1px;height:531px;background:#dcdcdc"></div><div style="left:1541px;top:304px;width:437px;height:1px;background:#dcdcdc"></div><div style="left:1541px;top:348px;width:437px;height:1px;background:#dcdcdc"></div><div style="left:1541px;top:392px;width:437px;height:1px;background:#dcdcdc"></div><div style="left:1541px;top:436px;width:437px;height:1px;background:#dcdcdc"></div><div style="left:1541px;top:480px;width:437px;height:1px;background:#dcdcdc"></div><div style="left:1541px;top:524px;width:437px;height:1px;background:#dcdcdc"></div><div style="left:1541px;top:568px;width:437px;height:1px;background:#dcdcdc"></div><div style="left:1541px;top:612px;width:437px;height:1px;background:#dcdcdc"></div><div style="left:1541px;top:656px;width:437px;height:1px;background:#dcdcdc"></div><div style="left:1541px;top:700px;width:437px;height:1px;background:#dcdcdc"></div><div style="left:1541px;top:744px;width:437px;height:1px;background:#dcdcdc"></div><div style="left:1541px;top:788px;width:437px;height:1px;background:#dcdcdc"></div>
<div class="h" style="left:1550.5px;top:256.7px">Forecast Final<br>Cost</div>
<div class="a" style="left:1660px;top:272px;width:18px;height:2px;background:#d8dada"></div><div class="a" style="left:1663.5px;top:276.5px;width:11px;height:2px;background:#d8dada;border-radius:1px"></div><div class="a" style="left:1667px;top:281px;width:4px;height:2px;background:#d8dada"></div>
<div class="h" style="left:1696.5px;top:256.7px">Forecast Final<br>MH</div>
<div class="a" style="left:1805px;top:272px;width:18px;height:2px;background:#d8dada"></div><div class="a" style="left:1808.5px;top:276.5px;width:11px;height:2px;background:#d8dada;border-radius:1px"></div><div class="a" style="left:1812px;top:281px;width:4px;height:2px;background:#d8dada"></div>
<div class="h" style="left:1841.5px;top:256.7px">Forecast Final<br>Man Hour/Unit</div>
<div class="a" style="left:1951px;top:272px;width:18px;height:2px;background:#d8dada"></div><div class="a" style="left:1954.5px;top:276.5px;width:11px;height:2px;background:#d8dada;border-radius:1px"></div><div class="a" style="left:1958px;top:281px;width:4px;height:2px;background:#d8dada"></div>
<div style="left:1542px;top:750px;width:145px;height:34px;background:#80bddc"></div>
<div style="left:1688px;top:750px;width:144px;height:34px;background:#80bddc"></div>
<div style="left:1833px;top:750px;width:145px;height:34px;background:#80bddc"></div>
<div class="a" style="left:1544px;top:316px;width:1px;height:9px;background:#cc1111"></div><div class="a" style="left:1544px;top:326px;width:1px;height:2px;background:#cc1111"></div><div class="a" style="left:1544px;top:329px;width:1px;height:9px;background:#cc1111"></div><div class="a" style="left:1546px;top:316px;width:1px;height:9px;background:#cc1111"></div><div class="a" style="left:1546px;top:326px;width:1px;height:2px;background:#cc1111"></div><div class="a" style="left:1546px;top:329px;width:1px;height:9px;background:#cc1111"></div>
<div class="t g" style="right:225.20000000000005px;top:305px;">$250,000.00</div>
<div class="t" style="right:80.20000000000005px;top:305px;">0.00</div>
<div class="a" style="left:1544px;top:360px;width:1px;height:9px;background:#cc1111"></div><div class="a" style="left:1544px;top:370px;width:1px;height:2px;background:#cc1111"></div><div class="a" style="left:1544px;top:373px;width:1px;height:9px;background:#cc1111"></div><div class="a" style="left:1546px;top:360px;width:1px;height:9px;background:#cc1111"></div><div class="a" style="left:1546px;top:370px;width:1px;height:2px;background:#cc1111"></div><div class="a" style="left:1546px;top:373px;width:1px;height:9px;background:#cc1111"></div>
<div class="t g" style="right:225.20000000000005px;top:349px;">$400,000.00</div>
<div class="t" style="right:80.20000000000005px;top:349px;">8,000.00</div>
<div class="a" style="left:1544px;top:404px;width:1px;height:9px;background:#cc1111"></div><div class="a" style="left:1544px;top:414px;width:1px;height:2px;background:#cc1111"></div><div class="a" style="left:1544px;top:417px;width:1px;height:9px;background:#cc1111"></div><div class="a" style="left:1546px;top:404px;width:1px;height:9px;background:#cc1111"></div><div class="a" style="left:1546px;top:414px;width:1px;height:2px;background:#cc1111"></div><div class="a" style="left:1546px;top:417px;width:1px;height:9px;background:#cc1111"></div>
<div class="t g" style="right:225.20000000000005px;top:393px;">$1,500,000.00</div>
<div class="t" style="right:80.20000000000005px;top:393px;">30,000.00</div>
<div class="t g" style="right:225.20000000000005px;top:437px;">$1,050,000.00</div>
<div class="t" style="right:80.20000000000005px;top:437px;">20,000.00</div>
<div class="a" style="left:1544px;top:492px;width:1px;height:9px;background:#1b86c4"></div><div class="a" style="left:1544px;top:502px;width:1px;height:2px;background:#1b86c4"></div><div class="a" style="left:1544px;top:505px;width:1px;height:9px;background:#1b86c4"></div><div class="a" style="left:1546px;top:492px;width:1px;height:9px;background:#1b86c4"></div><div class="a" style="left:1546px;top:502px;width:1px;height:2px;background:#1b86c4"></div><div class="a" style="left:1546px;top:505px;width:1px;height:9px;background:#1b86c4"></div>
<div class="t g" style="right:225.20000000000005px;top:481px;">$800,000.00</div>
<div class="t" style="right:80.20000000000005px;top:481px;">16,000.00</div>
<div class="a" style="left:1544px;top:536px;width:1px;height:9px;background:#1b86c4"></div><div class="a" style="left:1544px;top:546px;width:1px;height:2px;background:#1b86c4"></div><div class="a" style="left:1544px;top:549px;width:1px;height:9px;background:#1b86c4"></div><div class="a" style="left:1546px;top:536px;width:1px;height:9px;background:#1b86c4"></div><div class="a" style="left:1546px;top:546px;width:1px;height:2px;background:#1b86c4"></div><div class="a" style="left:1546px;top:549px;width:1px;height:9px;background:#1b86c4"></div>
<div class="t g" style="right:225.20000000000005px;top:525px;">$200,000.00</div>
<div class="t" style="right:80.20000000000005px;top:525px;">4,000.00</div>
<div class="a" style="left:1544px;top:580px;width:1px;height:9px;background:#1b86c4"></div><div class="a" style="left:1544px;top:590px;width:1px;height:2px;background:#1b86c4"></div><div class="a" style="left:1544px;top:593px;width:1px;height:9px;background:#1b86c4"></div><div class="a" style="left:1546px;top:580px;width:1px;height:9px;background:#1b86c4"></div><div class="a" style="left:1546px;top:590px;width:1px;height:2px;background:#1b86c4"></div><div class="a" style="left:1546px;top:593px;width:1px;height:9px;background:#1b86c4"></div>
<div class="t g" style="right:225.20000000000005px;top:569px;">$50,000.00</div>
<div class="t" style="right:80.20000000000005px;top:569px;">0.00</div>
<div class="t g" style="right:225.20000000000005px;top:613px;">$1,750,000.00</div>
<div class="t" style="right:80.20000000000005px;top:613px;">0.00</div>
<div class="a" style="left:1544px;top:668px;width:1px;height:9px;background:#1b86c4"></div><div class="a" style="left:1544px;top:678px;width:1px;height:2px;background:#1b86c4"></div><div class="a" style="left:1544px;top:681px;width:1px;height:9px;background:#1b86c4"></div><div class="a" style="left:1546px;top:668px;width:1px;height:9px;background:#1b86c4"></div><div class="a" style="left:1546px;top:678px;width:1px;height:2px;background:#1b86c4"></div><div class="a" style="left:1546px;top:681px;width:1px;height:9px;background:#1b86c4"></div>
<div class="t g" style="right:225.20000000000005px;top:657px;">$250,000.00</div>
<div class="t" style="right:80.20000000000005px;top:657px;">0.00</div>
<div class="a" style="left:1544px;top:712px;width:1px;height:9px;background:#1b86c4"></div><div class="a" style="left:1544px;top:722px;width:1px;height:2px;background:#1b86c4"></div><div class="a" style="left:1544px;top:725px;width:1px;height:9px;background:#1b86c4"></div><div class="a" style="left:1546px;top:712px;width:1px;height:9px;background:#1b86c4"></div><div class="a" style="left:1546px;top:722px;width:1px;height:2px;background:#1b86c4"></div><div class="a" style="left:1546px;top:725px;width:1px;height:9px;background:#1b86c4"></div>
<div class="t g" style="right:225.20000000000005px;top:701px;">$1,000,000.00</div>
<div class="t" style="right:80.20000000000005px;top:701px;">0.00</div>
<div class="a" style="left:1544px;top:756px;width:1px;height:9px;background:#1b86c4"></div><div class="a" style="left:1544px;top:766px;width:1px;height:2px;background:#1b86c4"></div><div class="a" style="left:1544px;top:769px;width:1px;height:9px;background:#1b86c4"></div><div class="a" style="left:1546px;top:756px;width:1px;height:9px;background:#1b86c4"></div><div class="a" style="left:1546px;top:766px;width:1px;height:2px;background:#1b86c4"></div><div class="a" style="left:1546px;top:769px;width:1px;height:9px;background:#1b86c4"></div>
<div class="t g" style="right:225.20000000000005px;top:745px;">$500,000.00</div>
<div class="t" style="right:80.20000000000005px;top:745px;">0.00</div>
</div>
<div style="left:23px;top:955px;width:347px;height:45px;background:#e4e4e4"></div>
<div style="left:386px;top:955px;width:248px;height:45px;background:#e4e4e4"></div>
<div style="left:650px;top:953px;width:875px;height:45px;background:#e4e4e4"></div>
<div style="left:1541px;top:955px;width:357px;height:45px;background:#e4e4e4"></div>
<div class="t" style="left:31px;top:955.6px;letter-spacing:.3px">Subtotals</div>
<div class="t" style="left:142.6px;top:955.6px;letter-spacing:.4px">11</div>
<div class="t g" style="right:1138.4px;top:954px;">$4,900,000.00</div>
<div class="t g" style="right:993.4px;top:954px;">58,000.00</div>
<div class="t g" style="right:247.20000000000005px;top:956px;">$4,950,000.00</div>
<div class="t g" style="right:102.20000000000005px;top:956px;">58,000.00</div>
<div style="left:1903px;top:302px;width:17px;height:654px;background:#f1f1f1"></div>
<svg style="left:1907px;top:308px" width="9" height="5" viewBox="0 0 9 5"><path d="M0.5,5 H8.5 L4.5,0.6Z" fill="#a3a3a3"/></svg>
<svg style="left:1907px;top:944px" width="9" height="5" viewBox="0 0 9 5"><path d="M0.5,0 H8.5 L4.5,4.4Z" fill="#a3a3a3"/></svg>
<div style="left:0px;top:1020px;width:1898px;height:17px;background:#f1f1f1"></div>
<div style="left:17px;top:1022px;width:1068px;height:13px;background:#c1c1c1"></div>
<svg style="left:5.6px;top:1024px" width="5" height="9" viewBox="0 0 5 9"><path d="M4.6,0.8 V8.2 L0.4,4.5Z" fill="#a3a3a3"/></svg>
<svg style="left:1887.7px;top:1024px" width="5" height="9" viewBox="0 0 5 9"><path d="M0,0.5 V8.5 L4.4,4.5Z" fill="#404040"/></svg>
<div style="left:0px;top:1047px;width:1920px;height:33px;background:#fbfbfb"></div>
<div class="t" style="left:10.7px;top:1052.6px;line-height:20px;height:20px;font-size:12.6px;color:#3a3a3a;letter-spacing:.37px">©2017 InEight Inc Privacy and Terms <span style="color:#a8a8a8;letter-spacing:.2px">| Build: TRN-WEB 2.0.6352.34563 | User: Kris Pooley &lt;kris.pooley@ineight.com&gt;</span></div>
<svg style="left:1776px;top:1046px" width="126" height="33" viewBox="1776 1046 126 33"><g fill="none" stroke="#4d585a" stroke-width="2.7" stroke-linecap="butt" stroke-linejoin="miter"><path d="M1782.4,1057.1 V1067.9"/><path d="M1787.9,1057.1 H1791.2 L1797.5,1063.5 V1057.1 H1800.3 V1067.9 H1797 L1790.7,1061.5 V1067.9 H1787.9Z" fill="#4d585a" stroke="none"/><path d="M1812.7,1058.45 H1806.4 V1066.55 H1812.7 M1806.4,1062.5 H1812.2"/><path d="M1818.8,1057.1 V1067.9"/><path d="M1835,1058.45 H1826.4 V1066.55 H1833.6 V1062.6 H1830.2"/><path d="M1841.1,1057.1 V1067.9 M1847.7,1057.1 V1067.9 M1841.1,1062.5 H1847.7"/><path d="M1853.9,1058.45 H1861.9 M1857.9,1058 V1067.9"/></g><g fill="none" stroke="#4d585a" stroke-width="2.5" stroke-linejoin="round"><path d="M1872.9,1066.5 V1055.7 L1884.3,1049.3 L1894.9,1055.2"/><path d="M1896.1,1058.4 V1068.6 L1884.5,1075.2 L1874.1,1069.4"/></g><path d="M1878,1058.6 L1885.4,1054.4 L1891.2,1057.6 V1060.2 L1885.4,1057.4 L1881.6,1059.8 L1891.2,1064.4 V1067.6 L1884,1071.4 L1877.8,1068.2 V1065.4 L1884,1068.4 L1887.8,1066.2 L1878,1061.4Z" fill="#4d585a" opacity=".72"/></svg>
</body></html>
